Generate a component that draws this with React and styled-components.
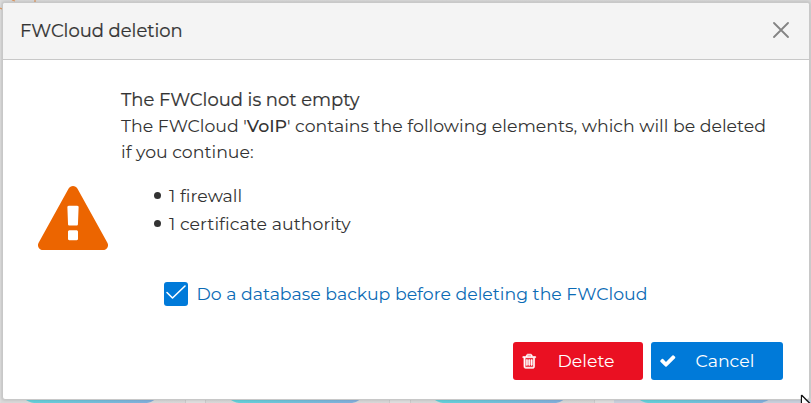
import React from 'react';
import styled, { createGlobalStyle } from 'styled-components';

const GlobalStyle = createGlobalStyle`
  *, *::before, *::after { box-sizing: border-box; }
  body { margin: 0; overflow: hidden; background: #d9d9d9; }
`;

const Page = styled.div`
  position: relative;
  width: 811px;
  height: 403px;
  padding: 2px 1px 0 2px;
  overflow: hidden;
  background: linear-gradient(90deg, #dedede 0, #d8d8d8 1px, #d6d6d6 100%);
  color: #333;
  font-family: Montserrat, Inter, sans-serif;
  font-size: 17.33px;
`;

const Backdrop = styled.svg`
  position: absolute;
  inset: 0;
`;

const Dialog = styled.section`
  position: relative;
  display: flex;
  flex-direction: column;
  width: 808px;
  height: 398px;
  border: 1px solid #c8c8c8;
  border-radius: 3px;
  background: #fff;
  box-shadow: 0 0 3px rgba(0, 0, 0, 0.16);
`;

const Header = styled.header`
  display: flex;
  align-items: center;
  justify-content: space-between;
  height: 57px;
  padding: 0 20px 2px 17px;
  border-bottom: 1px solid #c8c8c8;
  border-radius: 2px 2px 0 0;
  background: #f4f4f4;
`;

const Text = styled.span`
  white-space: nowrap;
  font-weight: ${(p) => p.$weight || 400};
  letter-spacing: ${(p) => p.$spacing || 0}px;
`;

const Title = styled(Text)`
  padding-top: 2.5px;
  font-size: 17.95px;
  line-height: 24px;
  -webkit-text-stroke: 0.2px currentColor;
`;

const Heading = styled(Title)`
  padding: 1.5px 0 1px;
`;

const CloseButton = styled.button`
  display: flex;
  padding: 0;
  border: 0;
  background: none;
  color: #848484;
`;

const Body = styled.div`
  display: flex;
  height: 226px;
  padding: 26px 0 0 35px;
`;

const WarningIcon = styled.svg`
  flex: none;
  width: 70px;
  height: 69px;
  margin: 100px 13px 0 0;
`;

const Message = styled.div`
  display: flex;
  flex-direction: column;
  line-height: 26.5px;
`;

const List = styled.ul`
  margin: 16px 0 0;
  padding: 0 0 0 33px;
  list-style: none;
  line-height: 28px;
`;

const Item = styled.li`
  display: flex;
  align-items: center;
  gap: 8px;
  &::before {
    content: '';
    width: 7px;
    height: 7px;
    border-radius: 50%;
    background: #333;
  }
`;

const Option = styled.label`
  display: flex;
  align-items: center;
  gap: 8.5px;
  height: 24px;
  line-height: 22px;
  margin: -4px 0 0 161px;
  color: #0b6bb5;
`;

const CheckBox = styled.span`
  display: flex;
  width: 24px;
  height: 24px;
  border-radius: 3px;
  background: #007ad9;
`;

const Footer = styled.footer`
  display: flex;
  justify-content: flex-end;
  gap: 8px;
  margin-top: 36px;
  padding-right: 26px;
`;

const Button = styled.button`
  display: flex;
  align-items: center;
  width: ${(p) => p.$width}px;
  height: 38px;
  padding: 0 0 0 8px;
  border: 0;
  border-radius: 3px;
  background: ${(p) => p.$color};
  color: #fff;
  font: inherit;
  line-height: 22px;
`;

const ButtonIcon = styled.svg`
  flex: none;
  width: ${(p) => p.$size}px;
  height: ${(p) => p.$size}px;
  margin-right: ${(p) => p.$gap}px;
`;

const Pointer = styled.svg`
  position: absolute;
  left: 800px;
  top: 394px;
`;

const TRASH =
  'M704 736v576q0 14-9 23t-23 9h-64q-14 0-23-9t-9-23v-576q0-14 9-23t23-9h64q14 0 23 9t9 23zm256 0v576q0 14-9 23t-23 9h-64q-14 0-23-9t-9-23v-576q0-14 9-23t23-9h64q14 0 23 9t9 23zm256 0v576q0 14-9 23t-23 9h-64q-14 0-23-9t-9-23v-576q0-14 9-23t23-9h64q14 0 23 9t9 23zm128 724v-948h-896v948q0 22 7 40.5t14.5 27 10.5 8.5h832q3 0 10.5-8.5t14.5-27 7-40.5zm-672-1076h448l-48-117q-7-9-17-11h-317q-10 2-17 11zm928 32v64q0 14-9 23t-23 9h-96v948q0 83-47 143.5t-113 60.5h-832q-66 0-113-58.5t-47-141.5v-952h-96q-14 0-23-9t-9-23v-64q0-14 9-23t23-9h309l70-167q15-37 54-63t79-26h320q40 0 79 26t54 63l70 167h309q14 0 23 9t9 23z';
const CHECK =
  'M1671 566q0 40-28 68l-724 724-136 136q-28 28-68 28t-68-28l-136-136-362-362q-28-28-28-68t28-68l136-136q28-28 68-28t68 28l294 295 656-657q28-28 68-28t68 28l136 136q28 28 28 68z';
const WARNING =
  'M1024 1375v-190q0-14-9.5-23.5t-22.5-9.5h-192q-13 0-22.5 9.5t-9.5 23.5v190q0 14 9.5 23.5t22.5 9.5h192q13 0 22.5-9.5t9.5-23.5zm-2-374l18-459q0-12-10-19-13-11-24-11h-220q-11 0-24 11-10 7-10 21l17 457q0 10 10 16.5t24 6.5h185q14 0 23.5-6.5t10.5-16.5zm-14-934l768 1408q35 63-2 126-17 29-46.5 46t-63.5 17h-1536q-34 0-63.5-17t-46.5-46q-37-63-2-126l768-1408q17-31 47-49t65-18 65 18 47 49z';

export default function App() {
  return (
    <Page>
      <GlobalStyle />
      <Backdrop width="811" height="403" aria-hidden="true">
        <defs>
          <linearGradient id="pill">
            <stop offset="0" stopColor="#62d2d9" />
            <stop offset="1" stopColor="#83addb" />
          </linearGradient>
        </defs>
        <path d="M186 400h19v3h-19zM390 400h20v3h-20zM595 400h19v3h-19z" fill="#dedede" />
        <path d="M614 400h197v3H614z" fill="#c8d0dc" />
        <path d="M185.500 400v3M205.500 400v3M389.500 400v3M410.500 400v3M594.500 400v3" stroke="#c9c9c9" />
        {[25, 230, 434, 639].map((x) => (
          <path key={x} d={`M${x} 399h131q-4 3-9 4h-113q-6-1-9-4z`} fill="url(#pill)" />
        ))}
        <path d="M12 0l3 1M35 0v2M0 8l2 1" stroke="#de9a63" strokeWidth="1.300" />
      </Backdrop>
      <Dialog role="dialog">
        <Header>
          <Title>FWCloud deletion</Title>
          <CloseButton aria-label="Close">
            <svg width="16" height="16" viewBox="0 0 16 16" stroke="currentColor" strokeWidth="1.8" strokeLinecap="round">
              <path d="M1 1l14 14M15 1L1 15" />
            </svg>
          </CloseButton>
        </Header>
        <Body>
          <WarningIcon viewBox="0 0 1792 1792" preserveAspectRatio="none" fill="#ec6500">
            <path d={WARNING} />
          </WarningIcon>
          <Message>
            <Heading>The FWCloud is not empty</Heading>
            <Text>
              The FWCloud '<Text as="b" $weight={500}>VoIP</Text>' contains the following elements, which will be deleted
            </Text>
            <Text>if you continue:</Text>
            <List>
              <Item><Text $spacing={0.05}>1 firewall</Text></Item>
              <Item><Text $spacing={0.05}>1 certificate authority</Text></Item>
            </List>
          </Message>
        </Body>
        <Option>
          <CheckBox>
            <svg width="24" height="24" viewBox="0 0 24 24" fill="none" stroke="#fff" strokeWidth="1.6" strokeLinecap="round" strokeLinejoin="round">
              <path d="M3 10.500l5.500 5.500L21 4" />
            </svg>
          </CheckBox>
          <Text>Do a database backup before deleting the FWCloud</Text>
        </Option>
        <Footer>
          <Button $width={130} $color="#ea1022">
            <ButtonIcon $size={16.5} $gap={20} viewBox="0 0 1792 1792" fill="currentColor" stroke="currentColor" strokeWidth="70">
              <path d={TRASH} />
            </ButtonIcon>
            <Text>Delete</Text>
          </Button>
          <Button $width={132} $color="#007ad9">
            <ButtonIcon $size={17.5} $gap={19} viewBox="0 0 1792 1792" fill="currentColor">
              <path d={CHECK} />
            </ButtonIcon>
            <Text>Cancel</Text>
          </Button>
        </Footer>
      </Dialog>
      <Pointer width="11" height="9" viewBox="0 0 11 9" aria-hidden="true">
        <path d="M1.500 1v12M1.500 1l10 10" fill="#fff" stroke="#111" strokeWidth="1.300" />
        <path d="M2 3v6h6z" fill="#fff" />
      </Pointer>
    </Page>
  );
}
